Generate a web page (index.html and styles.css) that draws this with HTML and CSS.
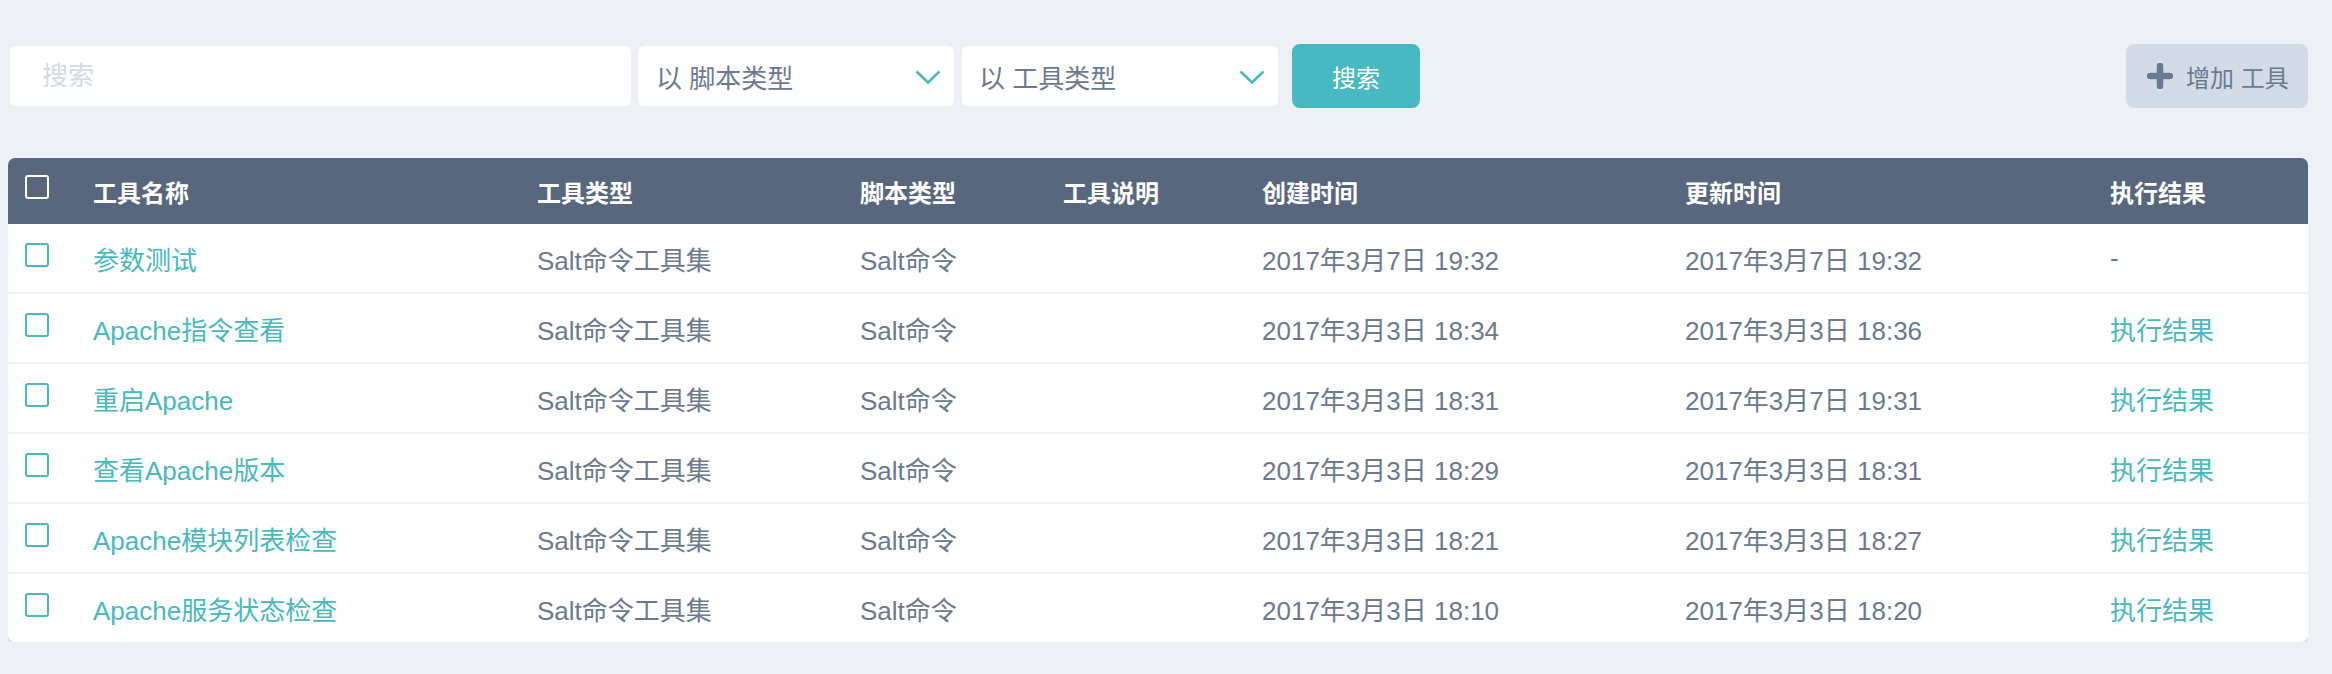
FILE: index.html
```html
<!DOCTYPE html>
<html lang="zh-CN">
<head>
<meta charset="utf-8">
<title>工具</title>
<link rel="stylesheet" href="styles.css">
</head>
<body>
<div class="page">
  <div class="toolbar">
    <input class="search" type="text" placeholder="搜索">
    <div class="select select-1"><span>以 脚本类型</span><svg class="chev" width="26" height="14" viewBox="0 0 26 14"><path d="M1.5 1.5 L13 12.5 L24.5 1.5" fill="none" stroke="#48b9c0" stroke-width="2.6"/></svg></div>
    <div class="select select-2"><span>以 工具类型</span><svg class="chev" width="26" height="14" viewBox="0 0 26 14"><path d="M1.5 1.5 L13 12.5 L24.5 1.5" fill="none" stroke="#48b9c0" stroke-width="2.6"/></svg></div>
    <button class="btn-search">搜索</button>
    <div class="spacer"></div>
    <button class="btn-add"><svg class="plus" width="26" height="26" viewBox="0 0 26 26"><path d="M13 3 V23 M3 13 H23" stroke="#6b7a90" stroke-width="6.5" stroke-linecap="round"/></svg><span>增加 工具</span></button>
  </div>

  <div class="card">
    <div class="row head">
      <div class="cell cb"><span class="box box-head"></span></div>
      <div class="cell">工具名称</div>
      <div class="cell">工具类型</div>
      <div class="cell">脚本类型</div>
      <div class="cell">工具说明</div>
      <div class="cell">创建时间</div>
      <div class="cell">更新时间</div>
      <div class="cell">执行结果</div>
    </div>
    <div class="row">
      <div class="cell cb"><span class="box"></span></div>
      <div class="cell link">参数测试</div>
      <div class="cell">Salt命令工具集</div>
      <div class="cell">Salt命令</div>
      <div class="cell"></div>
      <div class="cell">2017年3月7日 19:32</div>
      <div class="cell">2017年3月7日 19:32</div>
      <div class="cell">-</div>
    </div>
    <div class="row">
      <div class="cell cb"><span class="box"></span></div>
      <div class="cell link">Apache指令查看</div>
      <div class="cell">Salt命令工具集</div>
      <div class="cell">Salt命令</div>
      <div class="cell"></div>
      <div class="cell">2017年3月3日 18:34</div>
      <div class="cell">2017年3月3日 18:36</div>
      <div class="cell link">执行结果</div>
    </div>
    <div class="row">
      <div class="cell cb"><span class="box"></span></div>
      <div class="cell link">重启Apache</div>
      <div class="cell">Salt命令工具集</div>
      <div class="cell">Salt命令</div>
      <div class="cell"></div>
      <div class="cell">2017年3月3日 18:31</div>
      <div class="cell">2017年3月7日 19:31</div>
      <div class="cell link">执行结果</div>
    </div>
    <div class="row">
      <div class="cell cb"><span class="box"></span></div>
      <div class="cell link">查看Apache版本</div>
      <div class="cell">Salt命令工具集</div>
      <div class="cell">Salt命令</div>
      <div class="cell"></div>
      <div class="cell">2017年3月3日 18:29</div>
      <div class="cell">2017年3月3日 18:31</div>
      <div class="cell link">执行结果</div>
    </div>
    <div class="row">
      <div class="cell cb"><span class="box"></span></div>
      <div class="cell link">Apache模块列表检查</div>
      <div class="cell">Salt命令工具集</div>
      <div class="cell">Salt命令</div>
      <div class="cell"></div>
      <div class="cell">2017年3月3日 18:21</div>
      <div class="cell">2017年3月3日 18:27</div>
      <div class="cell link">执行结果</div>
    </div>
    <div class="row last">
      <div class="cell cb"><span class="box"></span></div>
      <div class="cell link">Apache服务状态检查</div>
      <div class="cell">Salt命令工具集</div>
      <div class="cell">Salt命令</div>
      <div class="cell"></div>
      <div class="cell">2017年3月3日 18:10</div>
      <div class="cell">2017年3月3日 18:20</div>
      <div class="cell link">执行结果</div>
    </div>
  </div>
</div>
</body>
</html>
```

FILE: styles.css
```css
* { box-sizing: border-box; }

html, body {
  margin: 0;
  padding: 0;
  background: #edf1f5;
  font-family: "Liberation Sans", "Noto Sans CJK SC", sans-serif;
  color: #6b7a90;
}

.page {
  padding: 44px 24px 0 8px;
}

.toolbar {
  display: flex;
  align-items: center;
  height: 64px;
}

.search {
  width: 621px;
  height: 60px;
  margin-left: 2px;
  border: none;
  border-radius: 6px;
  background: #fff;
  padding: 0 0 0 32px;
  font-family: inherit;
  font-size: 26px;
  color: #6b7a90;
  outline: none;
}
.search::placeholder { color: #d2dae4; }

.select {
  display: flex;
  align-items: center;
  justify-content: space-between;
  width: 316px;
  height: 60px;
  background: #fff;
  border-radius: 6px;
  padding: 0 13px 0 18px;
  font-size: 26px;
  color: #6b7a90;
}
.select-1 { margin-left: 7px; }
.select-2 { margin-left: 8px; padding-left: 17px; }
.chev { display: block; margin-top: 2px; }

.btn-search {
  margin-left: 14px;
  width: 128px;
  height: 64px;
  border: none;
  border-radius: 8px;
  background: #48b9c0;
  color: #fff;
  font-family: inherit;
  font-size: 24px;
  padding: 0;
}

.spacer { flex: 1; }

.btn-add {
  display: flex;
  align-items: center;
  height: 64px;
  width: 182px;
  border: none;
  border-radius: 8px;
  background: #d3dce6;
  color: #6b7a90;
  font-family: inherit;
  font-size: 24px;
  padding: 0 0 0 21px;
}
.plus { display: block; margin-right: 13px; }

.card {
  margin-top: 50px;
  background: #fff;
  border-radius: 7px;
  overflow: hidden;
  box-shadow: 0 3px 0 #d3dce6;
}

.row {
  display: grid;
  grid-template-columns: 85px 444px 323px 203px 199px 423px 425px 1fr;
  align-items: center;
  height: 70px;
  border-bottom: 2px solid #f1f3f6;
  font-size: 26px;
  color: #6b7a90;
}
.row.last { height: 68px; border-bottom: none; }

.row.head {
  height: 66px;
  border-bottom: none;
  background: #59677e;
  color: #fff;
  font-size: 24px;
  font-weight: bold;
}

.cell { white-space: nowrap; }
.cb { padding-left: 17px; display: flex; }

.box {
  display: block;
  width: 24px;
  height: 24px;
  border: 2.5px solid #48b9c0;
  border-radius: 3px;
  background: #fff;
  margin-bottom: 6px;
}
.box-head {
  border-color: #fff;
  background: transparent;
  margin-bottom: 8px;
}

.link { color: #48b9c0; }
```
